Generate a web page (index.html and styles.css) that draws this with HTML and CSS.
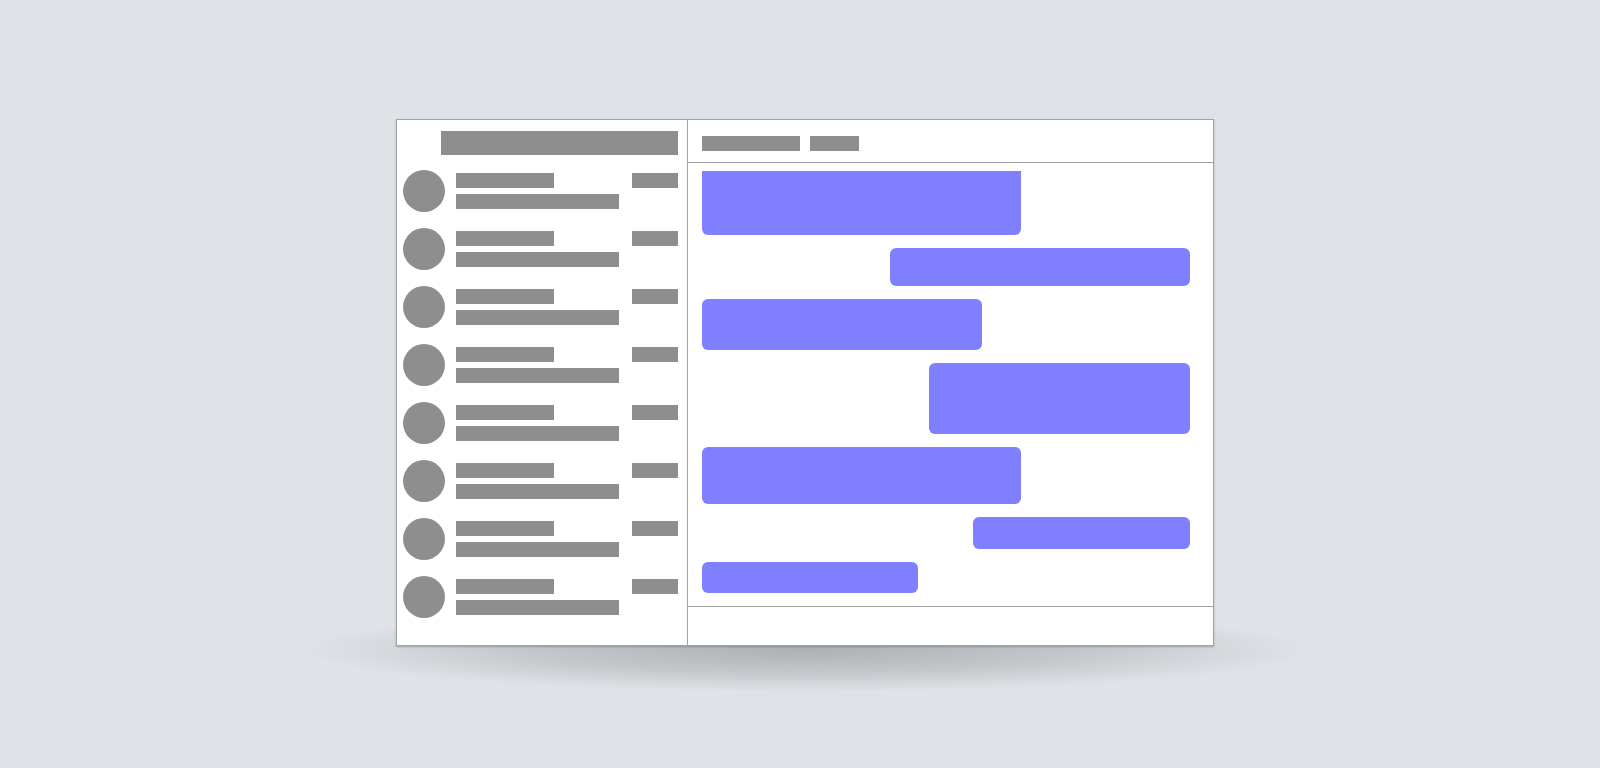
FILE: index.html
```html
<!DOCTYPE html>
<html lang="en">
  <head>
    <meta charset="utf-8" />
    <meta name="viewport" content="width=device-width, initial-scale=1" />
    <title>Chat Skeleton</title>
    <link rel="stylesheet" href="styles.css">
  </head>
  <body>
    <div class="stage">
      <div class="window">
        <!-- Conversation list -->
        <aside class="sidebar">
          <div class="search bar"></div>
          <ul class="contacts">
            <li class="contact">
              <span class="avatar"></span>
              <div class="contact-text">
                <div class="contact-top"><span class="bar name"></span><span class="bar time"></span></div>
                <span class="bar preview"></span>
              </div>
            </li>
            <li class="contact">
              <span class="avatar"></span>
              <div class="contact-text">
                <div class="contact-top"><span class="bar name"></span><span class="bar time"></span></div>
                <span class="bar preview"></span>
              </div>
            </li>
            <li class="contact">
              <span class="avatar"></span>
              <div class="contact-text">
                <div class="contact-top"><span class="bar name"></span><span class="bar time"></span></div>
                <span class="bar preview"></span>
              </div>
            </li>
            <li class="contact">
              <span class="avatar"></span>
              <div class="contact-text">
                <div class="contact-top"><span class="bar name"></span><span class="bar time"></span></div>
                <span class="bar preview"></span>
              </div>
            </li>
            <li class="contact">
              <span class="avatar"></span>
              <div class="contact-text">
                <div class="contact-top"><span class="bar name"></span><span class="bar time"></span></div>
                <span class="bar preview"></span>
              </div>
            </li>
            <li class="contact">
              <span class="avatar"></span>
              <div class="contact-text">
                <div class="contact-top"><span class="bar name"></span><span class="bar time"></span></div>
                <span class="bar preview"></span>
              </div>
            </li>
            <li class="contact">
              <span class="avatar"></span>
              <div class="contact-text">
                <div class="contact-top"><span class="bar name"></span><span class="bar time"></span></div>
                <span class="bar preview"></span>
              </div>
            </li>
            <li class="contact">
              <span class="avatar"></span>
              <div class="contact-text">
                <div class="contact-top"><span class="bar name"></span><span class="bar time"></span></div>
                <span class="bar preview"></span>
              </div>
            </li>
          </ul>
        </aside>
        <!-- Conversation -->
        <section class="chat">
          <header class="chat-header">
            <span class="bar title"></span>
            <span class="bar status"></span>
          </header>
          <div class="messages">
            <div class="bubble in first" style="width: 319px; height: 64px"></div>
            <div class="bubble out" style="width: 300px; height: 38px"></div>
            <div class="bubble in" style="width: 280px; height: 51px"></div>
            <div class="bubble out" style="width: 261px; height: 71px"></div>
            <div class="bubble in" style="width: 319px; height: 57px"></div>
            <div class="bubble out" style="width: 217px; height: 32px"></div>
            <div class="bubble in" style="width: 216px; height: 31px"></div>
          </div>
          <footer class="composer"></footer>
        </section>
      </div>
    </div>
  </body>
</html>
```

FILE: styles.css
```css
body {
  margin: 0;
  background: #dfe3e7;
  height: 768px;
  overflow: hidden;
}
.stage {
  padding-top: 119px;
  padding-left: 396px;
}
.window {
  position: relative;
  display: flex;
  box-sizing: border-box;
  width: 818px;
  height: 527px;
  background: #fff;
  border: 1px solid #a3a3a3;
  box-shadow: 0 1px 2px rgba(0, 0, 0, 0.25);
}
/* soft ellipse shadow under the window */
.window::before {
  content: "";
  position: absolute;
  left: 50%;
  top: 488px;
  width: 1010px;
  height: 84px;
  transform: translateX(-50%);
  background: radial-gradient(
    closest-side,
    rgba(0, 0, 0, 0.22),
    rgba(0, 0, 0, 0.12) 55%,
    rgba(0, 0, 0, 0.04) 85%,
    rgba(0, 0, 0, 0)
  );
  z-index: -1;
}
.bar {
  display: block;
  height: 15px;
  background: #8e8e8e;
}
.sidebar {
  width: 291px;
  box-sizing: border-box;
  border-right: 1px solid #a3a3a3;
  padding: 11px 9px 0 6px;
}
.search {
  height: 24px;
  margin-left: 38px;
}
.contacts {
  list-style: none;
  margin: 15px 0 0;
  padding: 0;
  display: flex;
  flex-direction: column;
  gap: 16px;
}
.contact {
  display: flex;
  align-items: center;
  gap: 11px;
}
.avatar {
  width: 42px;
  height: 42px;
  border-radius: 50%;
  background: #8e8e8e;
  flex-shrink: 0;
}
.contact-text {
  flex: 1;
  display: flex;
  flex-direction: column;
  gap: 6px;
}
.contact-top {
  display: flex;
  justify-content: space-between;
}
.name {
  width: 98px;
}
.time {
  width: 46px;
}
.preview {
  width: 163px;
}
.chat {
  flex: 1;
  display: flex;
  flex-direction: column;
}
.chat-header {
  height: 43px;
  box-sizing: border-box;
  border-bottom: 1px solid #a3a3a3;
  padding: 16px 0 0 14px;
  display: flex;
  gap: 10px;
}
.title {
  width: 98px;
}
.status {
  width: 49px;
}
.messages {
  flex: 1;
  display: flex;
  flex-direction: column;
  gap: 13px;
  padding: 8px 23px 0 14px;
}
.bubble {
  background: #7f7fff;
  border-radius: 6px;
  flex-shrink: 0;
}
.bubble.in {
  align-self: flex-start;
}
.bubble.out {
  align-self: flex-end;
}
.bubble.first {
  border-top-left-radius: 0;
  border-top-right-radius: 0;
}
.composer {
  height: 39px;
  box-sizing: border-box;
  border-top: 1px solid #a3a3a3;
}
```
